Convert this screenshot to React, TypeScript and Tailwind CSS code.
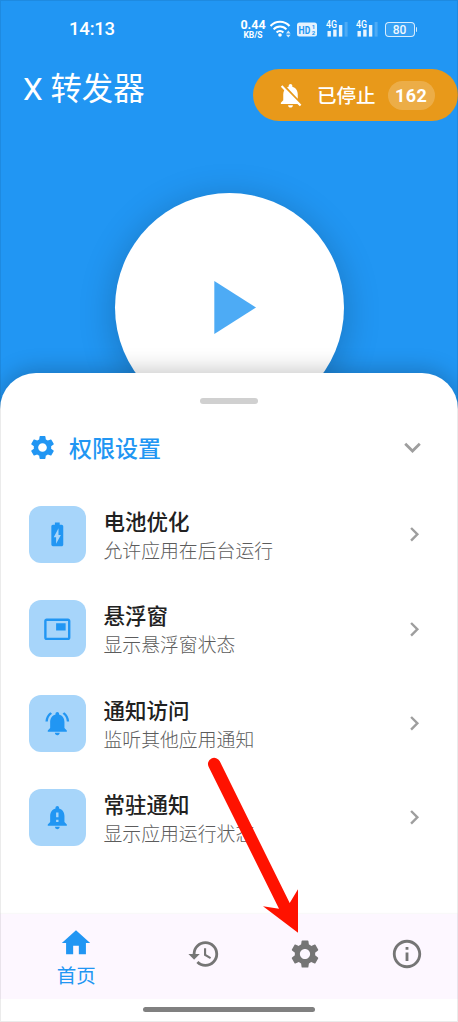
import type { IconType } from "react-icons";
import {
  MdBatteryChargingFull,
  MdChevronRight,
  MdExpandMore,
  MdHistory,
  MdHome,
  MdInfoOutline,
  MdNotificationImportant,
  MdNotificationsActive,
  MdNotificationsOff,
  MdPictureInPicture,
  MdPlayArrow,
  MdSettings,
} from "react-icons/md";

// 权限列表数据
const permissions: { icon: IconType; title: string; desc: string }[] = [
  { icon: MdBatteryChargingFull, title: "电池优化", desc: "允许应用在后台运行" },
  { icon: MdPictureInPicture, title: "悬浮窗", desc: "显示悬浮窗状态" },
  { icon: MdNotificationsActive, title: "通知访问", desc: "监听其他应用通知" },
  { icon: MdNotificationImportant, title: "常驻通知", desc: "显示应用运行状态" },
];

function Signal() {
  return (
    <svg className="w-[22px] h-[18px] shrink-0" viewBox="0 0 22 18" fill="#fff">
      <text x="0" y="8" fontSize="10" fontWeight="500" textLength="11" lengthAdjust="spacingAndGlyphs">
        4G
      </text>
      <rect x="1.5" y="11" width="3.4" height="5.6" opacity="0.9" />
      <rect x="7.2" y="9.6" width="3.4" height="7" opacity="0.9" />
      <rect x="12.9" y="5" width="3.4" height="11.6" opacity="0.9" />
      <rect x="18.6" y="2" width="3" height="14.6" opacity="0.2" />
    </svg>
  );
}

function StatusBar() {
  return (
    <div className="flex h-[58px] items-center pl-[69px] pr-[41px] text-white">
      <span className="pt-px text-[18.5px] font-medium leading-none tracking-[-0.2px]">14:13</span>
      <div className="ml-auto flex items-center">
        <div className="mr-[3px] flex w-[27px] flex-col items-center pt-px font-bold leading-none">
          <span className="text-[12.5px] leading-[10px]">0.44</span>
          <span className="pt-px text-[8.5px] leading-[9px]">KB/S</span>
        </div>
        {/* Wifi */}
        <svg className="mr-[6px] h-[18px] w-[21px]" viewBox="0 0 21 18" fill="none" stroke="#fff" strokeWidth="2.1">
          <path d="M.5 6C5.5.4 14.5.4 19.5 6" />
          <path d="M3.6 9.4C7 5.6 13 5.6 16.4 9.4" />
          <path d="M6.6 12.5c1.9-2 4.9-2 6.8 0" />
          <circle cx="10" cy="15" r="1.8" fill="#fff" stroke="none" />
          <path d="M16 13.4l2.3-2.8 2.3 2.8zM16 14.8l2.3 2.8 2.3-2.8z" fill="#fff" stroke="none" opacity="0.8" />
        </svg>
        {/* HD */}
        <svg className="mr-[9px] h-[15px] w-[20px]" viewBox="0 0 20 15">
          <rect y="0.5" width="20" height="14" rx="2.5" fill="#fff" opacity="0.88" />
          <g fill="#2196f3" fontWeight="700">
            <text x="1.6" y="11.8" fontSize="11.5" textLength="11.6" lengthAdjust="spacingAndGlyphs">HD</text>
            <text x="14.8" y="6.8" fontSize="6">1</text>
            <text x="14.8" y="13.2" fontSize="6">2</text>
          </g>
        </svg>
        <Signal />
        <div className="w-[8px]" />
        <Signal />
        {/* Battery */}
        <div className="ml-[7px] flex items-center">
          <div className="flex h-[15px] w-[30px] items-center justify-center rounded-[4px] border border-white/80 bg-white/10 pt-px text-[12px] font-medium leading-none text-white/95">
            80
          </div>
          <div className="ml-px h-[5px] w-[1.5px] rounded-r bg-white/80" />
        </div>
      </div>
    </div>
  );
}

function BottomNav() {
  return (
    <nav className="flex h-[85px] items-center bg-[#fdf7ff] text-[#757575] shadow-[0_0_2px_rgba(0,0,0,0.08)]">
      <a className="flex grow-[1.5] basis-0 flex-col items-center pt-[3px] text-[#2196f3]" href="#0">
        <MdHome className="size-[34px]" />
        <span className="pt-[3px] text-[19.5px] leading-[27px]">首页</span>
      </a>
      <a className="flex grow basis-0 justify-center pb-[6px]" href="#0">
        <MdHistory className="size-[34px]" />
      </a>
      <a className="flex grow basis-0 justify-center pb-[6px]" href="#0">
        <MdSettings className="size-[34px]" />
      </a>
      <a className="flex grow basis-0 justify-center pb-[6px]" href="#0">
        <MdInfoOutline className="size-[34px]" />
      </a>
    </nav>
  );
}

export default function App() {
  return (
    <div className="relative flex h-[1022px] w-full flex-col overflow-hidden bg-[#2196f3] font-['Roboto','Noto_Sans_CJK_SC',sans-serif]">
      {/* Header + play button */}
      <header className="h-[373px] shrink-0">
        <StatusBar />
        <div className="flex justify-between pl-[23px]">
          <h1 className="pt-[10px] text-[31.4px] leading-[44px] text-white">X 转发器</h1>
          <div className="mt-[11px] flex h-[52px] w-[205px] items-center rounded-full bg-[#e8991a] pl-[23px] text-white">
            <MdNotificationsOff className="size-[29px]" />
            <span className="ml-[12px] pt-[4px] text-[19.5px] font-medium leading-none">已停止</span>
            <span className="ml-[12px] flex h-[29px] w-[47px] items-center justify-center rounded-full bg-white/20 pt-px text-[18px] font-bold tracking-[0.4px]">
              162
            </span>
          </div>
        </div>
        <button className="mx-auto mt-[71.5px] flex size-[229px] items-center justify-center rounded-full bg-white shadow-[0_6px_36px_rgba(0,0,0,0.22)]">
          <MdPlayArrow className="size-[91px] text-[#4dabf5]" />
        </button>
      </header>

      {/* Bottom sheet */}
      <main className="relative flex grow flex-col rounded-t-[36px] bg-white shadow-[0_-3px_22px_rgba(0,0,0,0.22)]">
        <div className="mx-auto mt-[25px] h-[6px] w-[58px] rounded-full bg-[#d0d0d0]" />
        <div className="mt-[26px] flex h-[34px] items-center pl-[28px] pr-[29px] text-[#2196f3]">
          <MdSettings className="size-[29px]" />
          <h2 className="ml-[12px] pt-[5px] text-[23px] font-medium leading-none">权限设置</h2>
          <MdExpandMore className="ml-auto size-[33px] text-[#9e9e9e]" />
        </div>
        <ul className="mt-[42px] flex flex-col gap-[37.3px] pl-[28.5px] pr-[29px]">
          {permissions.map(({ icon: Icon, title, desc }) => (
            <li key={title} className="flex h-[57px] items-center">
              <div className="flex size-[57px] items-center justify-center rounded-[12px] bg-[#a7d5fa] text-[#2196f3]">
                <Icon className="size-[28.6px]" />
              </div>
              <div className="ml-[18px] pt-[6px]">
                <div className="text-[21.5px] font-medium leading-[30px] text-[#212121]">{title}</div>
                <div className="text-[18.85px] font-light leading-[29px] text-[#5c5c5c]">{desc}</div>
              </div>
              <MdChevronRight className="ml-auto size-[28.6px] text-[#9e9e9e]" />
            </li>
          ))}
        </ul>
        <div className="mt-auto">
          <BottomNav />
          <div className="flex h-[23px] justify-center bg-white pt-[8px]">
            <div className="h-[5px] w-[172px] rounded-full bg-[#808080]" />
          </div>
        </div>
      </main>

      {/* Arrow pointing at the settings tab */}
      <svg className="pointer-events-none absolute left-0 top-0 h-[1022px] w-[458px]" viewBox="0 0 458 1022" fill="#ff1200">
        <path d="M208.6 766.8A6 6 0 0 1 219.8 761.3L289.7 903L298 889.3V932.7L263 906.3L279 908.7Z" />
      </svg>
      <div className="pointer-events-none absolute inset-0 border border-black/8" />
    </div>
  );
}
